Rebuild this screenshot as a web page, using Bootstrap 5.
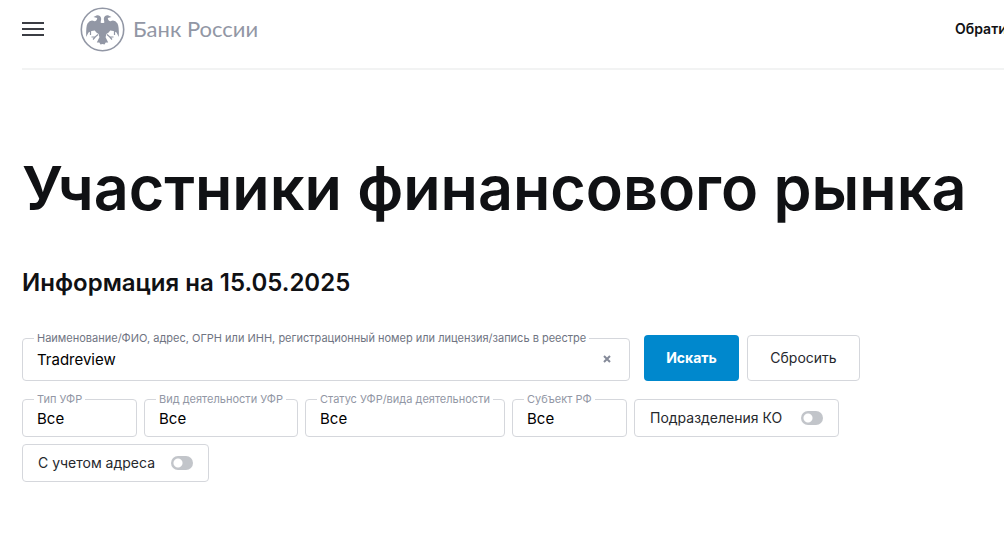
<!DOCTYPE html>
<html lang="ru">
<head>
<meta charset="utf-8">
<meta name="viewport" content="width=device-width, initial-scale=1">
<title>Участники финансового рынка | Банк России</title>
<link href="https://cdn.jsdelivr.net/npm/bootstrap@5.3.0/dist/css/bootstrap.min.css" rel="stylesheet">
<style>
  body { font-family: Inter, "Liberation Sans", sans-serif; font-size: 15px; line-height: 20px; color: #101114; overflow-x: hidden; }
  .page { padding-left: 22px; }
  .topbar { height: 70px; padding-bottom: 10px; border-bottom: 2px solid #f2f3f3; }
  .menu-btn { width: 22px; height: 22px; margin-right: 36px; }
  .brand { gap: 8px; color: #9297a5; }
  .brand-name { font-family: Lato, "Open Sans", sans-serif; font-weight: 400; font-size: 22px; line-height: 28px; }
  .feedback { width: 49px; font-size: 14px; font-weight: 600; color: #101114; white-space: nowrap; }
  .title { margin: 78px 0 41px; font-size: 61px; line-height: 80px; font-weight: 600; white-space: nowrap; }
  .info-date { margin: 0 0 38px; font-size: 24px; line-height: 28px; font-weight: 600; }
  .search-line { gap: 8px; margin-bottom: 18px; }
  .search-field { flex: 0 1 608px; height: 43px; margin-right: 6px; }
  .box { border: 1px solid #d5d7dc; border-radius: 4px; }
  .field { position: relative; }
  .field > label { position: absolute; left: 11px; top: -8px; padding: 0 3px; background: #fff; font-size: 11px; line-height: 14px; color: #9297a5; white-space: nowrap; }
  .search-field > label { color: #6f7482; }
  .field input, .field select { width: 100%; height: 100%; padding: 0 14px; border: 0; background: transparent; color: #000; appearance: none; font-size: 15px; line-height: 20px; }
  .field select { padding-top: 2px; }
  .clear-btn { position: absolute; right: 15px; top: 13px; width: 14px; height: 14px; }
  .action { height: 46px; font-size: 14px; line-height: 20px; border-radius: 4px; padding: 0; }
  .action-find { width: 95px; background: #0088cd; color: #fff; font-weight: 700; }
  .action-reset { width: 113px; border: 1px solid #d5d7dc; color: #26282d; }
  .filters { gap: 7px; }
  .filter { height: 38px; }
  .w-short { width: 115px; }
  .w-kind { width: 154px; }
  .w-state { width: 200px; }
  .toggle { padding: 0 15px; gap: 8px; font-size: 14px; color: #26282d; white-space: nowrap; }
  .w-units { width: 205px; }
  .w-address { width: 187px; }
  .toggle input { flex: none; appearance: none; width: 22px; height: 14px; margin: 0; border-radius: 7px; background: radial-gradient(circle at 7px 50%, #fff 4px, #c2c5ca 5px); }
</style>
</head>
<body>
<div class="page">
  <header class="topbar d-flex align-items-center">
    <button type="button" class="menu-btn btn p-0 border-0 d-flex" aria-label="Меню">
      <svg width="22" height="22" viewBox="0 0 22 22" stroke="#3b3d44" stroke-width="2"><path d="M0 5h22M0 11h22M0 17h22"/></svg>
    </button>
    <a href="#" class="brand d-flex align-items-center text-decoration-none">
      <svg width="45" height="45" viewBox="0 0 45 45" fill="#9297a5">
        <circle cx="22.5" cy="22.5" r="21.2" fill="none" stroke="#9297a5" stroke-width="1.6"/>
        <path d="M13.5 10 L17 8.2 Q21 8 21.2 12 L20.6 15.4 Q22.5 16.8 24.4 15.4 L23.8 12 Q24 8 28 8.2 L31.5 10 L27.8 11 Q28 14 30.5 14.2 Q34.5 12 37.5 16.5 Q39.2 19.5 38.8 30 L36.5 25.5 L33.5 24 L30.2 23.5 Q29 25.5 26.4 27 L25.6 30.2 L28.2 35.6 L25.7 35.4 L24.5 37.5 L22.5 37 L20.5 37.5 L19.3 35.4 L16.8 35.6 L19.4 30.2 L18.6 27 Q16 25.5 14.8 23.5 L11.5 24 L8.5 25.5 L6.2 30 Q5.8 19.5 7.5 16.5 Q10.5 12 14.5 14.2 Q17 14 17.2 11 Z"/>
        <path d="M10.5 24V28M34.5 24V28M18 27.5 15.2 30H11.5M15.2 30 13 32.5M27 27.5 29.8 30H33.5M29.8 30 32 32.5" fill="none" stroke="#9297a5" stroke-width="1.2"/>
      </svg>
      <span class="brand-name">Банк России</span>
    </a>
    <a href="#" class="feedback ms-auto text-decoration-none">Обрати</a>
  </header>

  <main>
    <h1 class="title">Участники финансового рынка</h1>
    <h2 class="info-date">Информация на 15.05.2025</h2>
    <form>
      <div class="search-line d-flex align-items-end">
        <div class="field box search-field">
          <label for="query">Наименование/ФИО, адрес, ОГРН или ИНН, регистрационный номер или лицензия/запись в реестре</label>
          <input type="text" id="query" value="Tradreview">
          <button type="button" class="clear-btn btn p-0 border-0 d-flex align-items-center justify-content-center" aria-label="Очистить">
            <svg width="8" height="8" viewBox="0 0 8 8" stroke="#858a99" stroke-width="2"><path d="M1 1 7 7M7 1 1 7"/></svg>
          </button>
        </div>
        <button type="submit" class="action action-find btn">Искать</button>
        <button type="reset" class="action action-reset btn">Сбросить</button>
      </div>
      <div class="filters d-flex flex-wrap">
        <div class="field box filter w-short"><label for="type">Тип УФР</label><select id="type"><option>Все</option></select></div>
        <div class="field box filter w-kind"><label for="kind">Вид деятельности УФР</label><select id="kind"><option>Все</option></select></div>
        <div class="field box filter w-state"><label for="state">Статус УФР/вида деятельности</label><select id="state"><option>Все</option></select></div>
        <div class="field box filter w-short"><label for="region">Субъект РФ</label><select id="region"><option>Все</option></select></div>
        <div class="toggle box filter w-units d-flex align-items-center justify-content-between"><label for="units">Подразделения КО</label><input type="checkbox" role="switch" id="units"></div>
        <div class="toggle box filter w-address d-flex align-items-center justify-content-between"><label for="address">С учетом адреса</label><input type="checkbox" role="switch" id="address"></div>
      </div>
    </form>
  </main>
</div>
<script src="https://cdn.jsdelivr.net/npm/bootstrap@5.3.0/dist/js/bootstrap.bundle.min.js"></script>
</body>
</html>
